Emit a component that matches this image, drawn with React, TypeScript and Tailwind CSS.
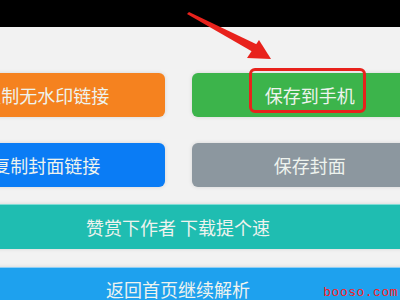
export default function App() {
  const btn =
    "h-[44px] flex items-center justify-center text-[18px] text-[#eef3ee] shadow-[0_0_4px_rgba(0,0,0,0.12)]";

  return (
    <div
      className="relative w-[400px] h-[300px] overflow-hidden bg-[#f2f2f2]"
      style={{ fontFamily: '"Noto Sans CJK SC", "Noto Sans", sans-serif' }}
    >
      <div className="h-[27px] bg-black" />
      <div className="ml-[-72px] w-[500px] pt-[46px] flex flex-col">
        <div className="grid grid-cols-2 gap-[27px]">
          <div className={`${btn} rounded-[6px] bg-[#f5821f]`}>复制无水印链接</div>
          <div className={`${btn} relative rounded-[6px] bg-[#3cb44b]`}>
            保存到手机
            <div className="absolute left-[57px] top-[-5px] w-[117px] h-[45px] border-[3px] border-[#e8221c] rounded-[6px]" />
          </div>
        </div>
        <div className="grid grid-cols-2 gap-[27px] mt-[26px]">
          <div className={`${btn} rounded-[6px] bg-[#0a7cf5]`}>复制封面链接</div>
          <div className={`${btn} rounded-[6px] bg-[#8c979f]`}>保存封面</div>
        </div>
        <div className={`${btn} mt-[17px] h-[45px] bg-[#1fbdb1] border-t border-[#7fdcd6]`}>
          赞赏下作者 下载提个速
        </div>
        <div className={`${btn} mt-[18px] bg-[#1ea1ee] border-t border-[#8fcff5]`}>
          返回首页继续解析
        </div>
      </div>

      <svg className="absolute left-0 top-0" width="400" height="80" viewBox="0 0 400 80">
        <polygon points="187,14 189,12 258,45 253,52" fill="#e8221c" />
        <polygon points="259,40 271,59 247,58" fill="#e8221c" />
      </svg>

      <div
        className="absolute right-[2px] bottom-[0px] text-[13px] leading-[14px] text-[#ff1a1a] tracking-[0.5px]"
        style={{ fontFamily: '"Liberation Mono", monospace' }}
      >
        booso.com
      </div>
    </div>
  );
}
